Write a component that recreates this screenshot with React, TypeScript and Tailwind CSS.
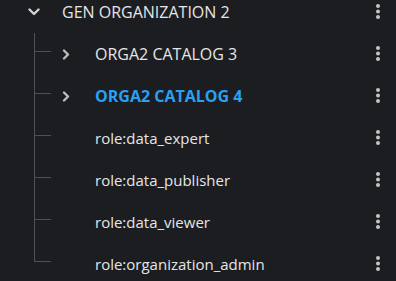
import React from "react";

const Kebab = () => (
  <svg width="8" height="18" viewBox="0 0 8 18" className="shrink-0">
    <circle cx="4" cy="3" r="2" fill="#c4c4c4" />
    <circle cx="4" cy="8.5" r="2" fill="#c4c4c4" />
    <circle cx="4" cy="14" r="2" fill="#c4c4c4" />
  </svg>
);

const ChevronDown = () => (
  <svg width="12" height="8" viewBox="0 0 12 8">
    <path d="M1.5 1.5 L6 6 L10.5 1.5" stroke="#d2d2d2" strokeWidth="2.4" fill="none" strokeLinecap="round" strokeLinejoin="round" />
  </svg>
);

const ChevronRight = () => (
  <svg width="8" height="11" viewBox="0 0 8 11">
    <path d="M2 1.5 L6 5.5 L2 9.5" stroke="#bdbdbd" strokeWidth="2.4" fill="none" strokeLinecap="round" strokeLinejoin="round" />
  </svg>
);

type Child = { label: string; expandable?: boolean; selected?: boolean };

const children: Child[] = [
  { label: "ORGA2 CATALOG 3", expandable: true },
  { label: "ORGA2 CATALOG 4", expandable: true, selected: true },
  { label: "role:data_expert" },
  { label: "role:data_publisher" },
  { label: "role:data_viewer" },
  { label: "role:organization_admin" },
];

export default function App() {
  return (
    <div
      className="w-[396px] h-[281px] overflow-hidden bg-[#1b1d21] text-[#e6e6e6]"
      style={{ fontFamily: '"Open Sans", "Liberation Sans", sans-serif' }}
    >
      <div className="-mt-[9px]">
        <div className="flex items-center h-[42px]">
          <div className="w-[62px] flex justify-start pl-[28px]">
            <ChevronDown />
          </div>
          <span className="flex-1 text-[16px]">GEN ORGANIZATION 2</span>
          <div className="w-[36px] flex justify-start pl-[14px]">
            <Kebab />
          </div>
        </div>
        {children.map((c, i) => {
          const last = i === children.length - 1;
          return (
            <div key={c.label} className="flex h-[42px]">
              <div className="w-[34px] shrink-0" />
              <div className="w-[17px] shrink-0 flex flex-col">
                <div className="h-[19px] border-l border-b border-[#4d5055]" />
                {!last && <div className="flex-1 border-l border-[#4d5055]" />}
              </div>
              <div className="flex-1 flex items-center">
                <div className="w-[44px] pl-[11px] flex">
                  {c.expandable && <ChevronRight />}
                </div>
                <span
                  className={
                    "flex-1 " +
                    (c.selected
                      ? "text-[16px] text-[#2ba0f0] font-bold"
                      : c.expandable
                      ? "text-[16px]"
                      : "text-[15px]")
                  }
                >
                  {c.label}
                </span>
                <div className="w-[36px] flex justify-start pl-[14px]">
                  <Kebab />
                </div>
              </div>
            </div>
          );
        })}
      </div>
    </div>
  );
}
